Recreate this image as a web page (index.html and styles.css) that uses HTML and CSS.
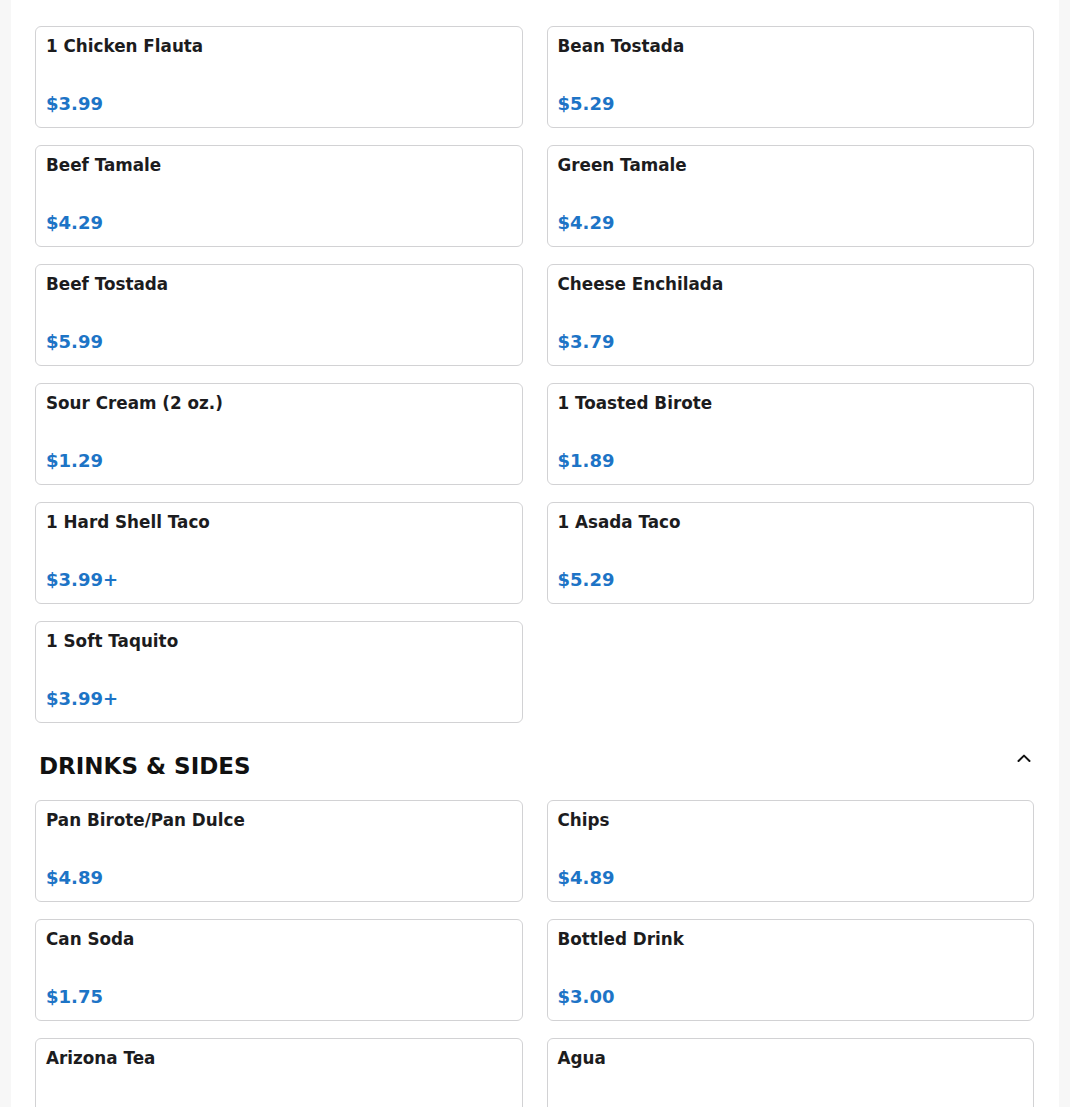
FILE: index.html
```html
<!DOCTYPE html>
<html lang="en">
<head>
<meta charset="utf-8">
<title>Menu</title>
<link rel="stylesheet" href="styles.css">
</head>
<body>
<main class="menu">
  <section class="section">
    <div class="section-head">
      <h2 class="section-title">SIDE ORDERS</h2>
    </div>
    <div class="grid">
      <div class="card"><div class="name">1 Chicken Flauta</div><div class="price">$3.99</div></div>
      <div class="card"><div class="name">Bean Tostada</div><div class="price">$5.29</div></div>
      <div class="card"><div class="name">Beef Tamale</div><div class="price">$4.29</div></div>
      <div class="card"><div class="name">Green Tamale</div><div class="price">$4.29</div></div>
      <div class="card"><div class="name">Beef Tostada</div><div class="price">$5.99</div></div>
      <div class="card"><div class="name">Cheese Enchilada</div><div class="price">$3.79</div></div>
      <div class="card"><div class="name">Sour Cream (2 oz.)</div><div class="price">$1.29</div></div>
      <div class="card"><div class="name">1 Toasted Birote</div><div class="price">$1.89</div></div>
      <div class="card"><div class="name">1 Hard Shell Taco</div><div class="price">$3.99+</div></div>
      <div class="card"><div class="name">1 Asada Taco</div><div class="price">$5.29</div></div>
      <div class="card"><div class="name">1 Soft Taquito</div><div class="price">$3.99+</div></div>
    </div>
  </section>
  <section class="section">
    <div class="section-head">
      <h2 class="section-title">DRINKS &amp; SIDES</h2>
      <svg class="chevron" width="14" height="8" viewBox="0 0 14 8" aria-hidden="true"><path d="M1.5 7 L7 1.6 L12.5 7" fill="none" stroke="#111" stroke-width="2" stroke-linecap="round" stroke-linejoin="round"/></svg>
    </div>
    <div class="grid">
      <div class="card"><div class="name">Pan Birote/Pan Dulce</div><div class="price">$4.89</div></div>
      <div class="card"><div class="name">Chips</div><div class="price">$4.89</div></div>
      <div class="card"><div class="name">Can Soda</div><div class="price">$1.75</div></div>
      <div class="card"><div class="name">Bottled Drink</div><div class="price">$3.00</div></div>
      <div class="card"><div class="name">Arizona Tea</div><div class="price">$3.29</div></div>
      <div class="card"><div class="name">Agua</div><div class="price">$3.99</div></div>
    </div>
  </section>
</main>
</body>
</html>
```
FILE: styles.css
```css
html, body {
  margin: 0;
  padding: 0;
  background: #f7f7f7;
  font-family: "DejaVu Sans", "Liberation Sans", sans-serif;
  color: #1c1c1e;
}

.menu {
  max-width: 1048px;
  margin: -51px auto 0;
  background: #ffffff;
  padding: 0 25px 40px 24px;
  box-sizing: border-box;
  min-height: 1200px;
}

.section-head {
  display: flex;
  justify-content: space-between;
  align-items: flex-start;
  padding: 29px 3px 20px 4px;
}

.section-title {
  margin: 0;
  font-size: 23px;
  line-height: 28px;
  font-weight: bold;
  color: #111;
}

.chevron {
  margin-top: 2px;
  display: block;
}

.grid {
  display: grid;
  grid-template-columns: 1fr 1fr;
  column-gap: 24px;
  row-gap: 17px;
}

.card {
  box-sizing: border-box;
  height: 102px;
  border: 1px solid #d2d2d4;
  border-radius: 6px;
  padding: 9px 10px 13px;
  display: flex;
  flex-direction: column;
  justify-content: space-between;
  background: #fff;
}

.name {
  font-size: 16.8px;
  line-height: 20px;
  font-weight: bold;
  color: #1c1c1e;
}

.price {
  font-size: 18px;
  line-height: 21px;
  font-weight: bold;
  color: #1d74c6;
}
```
